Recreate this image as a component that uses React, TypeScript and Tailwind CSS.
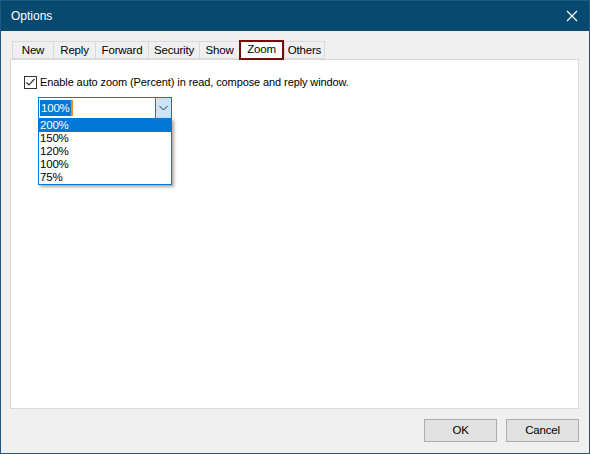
import React from "react";

const tabs = ["New", "Reply", "Forward", "Security", "Show", "Zoom", "Others"];
const tabWidths: Record<string, string> = {
  New: "w-[41px]",
  Reply: "w-[42px]",
  Forward: "w-[53px]",
  Security: "w-[51px]",
  Show: "w-[40px]",
  Zoom: "w-[45px]",
  Others: "w-[41px]",
};

const options = ["200%", "150%", "120%", "100%", "75%"];

export default function App() {
  return (
    <div
      className="w-[590px] h-[454px] flex flex-col border border-[#1d5b86] bg-[#f0f0f0] text-[11.5px] tracking-[-0.2px] text-black"
      style={{ fontFamily: '"Liberation Sans", Arial, sans-serif' }}
    >
      {/* title bar */}
      <div className="h-[30px] bg-[#084a6f] flex items-center justify-between pl-[10px] pr-[10px] text-white">
        <span className="text-[12px] tracking-normal leading-none">Options</span>
        <svg width="12" height="12" viewBox="0 0 12 12" className="mr-[1px]">
          <path d="M1 1 L11 11 M11 1 L1 11" stroke="#ffffff" strokeWidth="1.2" />
        </svg>
      </div>

      <div className="flex-1 flex flex-col">
        {/* tab strip */}
        <div className="flex items-end pl-[11px] pt-[9px] h-[28px]">
          {tabs.map((t) =>
            t === "Zoom" ? (
              <div
                key={t}
                className={`${tabWidths[t]} h-[20px] bg-white border-2 border-[#7a0b0b] flex items-start justify-center leading-[15px] -mb-[1px] relative z-10`}
              >
                {t}
              </div>
            ) : (
              <div
                key={t}
                className={`${tabWidths[t]} h-[18px] border border-[#d9d9d9] border-r-0 last:border-r bg-[#f0f0f0] flex items-center justify-center leading-none pt-[1px]`}
              >
                {t}
              </div>
            )
          )}
        </div>

        {/* tab page */}
        <div className="ml-[9px] w-[569px] h-[350px] bg-white border border-[#d9d9d9] relative">
          <div className="flex items-center pl-[13px] pt-[16px] gap-[3px]">
            <div className="w-[13px] h-[13px] border border-[#333333] bg-white flex items-center justify-center">
              <svg width="11" height="11" viewBox="0 0 11 11">
                <path d="M1.5 5.5 L4 8 L9.5 2" stroke="#333333" strokeWidth="1.2" fill="none" />
              </svg>
            </div>
            <span className="leading-none text-[11px] tracking-[-0.1px]">
              Enable auto zoom (Percent) in read, compose and reply window.
            </span>
          </div>

          {/* combo box */}
          <div className="ml-[27px] mt-[8px] w-[134px] h-[22px] border border-[#0078d7] flex items-stretch relative">
            <div className="flex-1 flex items-center pl-[1px]">
              <span className="bg-[#0078d7] text-white px-[1px] leading-[16px]">100%</span>
              <span className="w-[2px] h-[16px] bg-[#f08a24]" />
            </div>
            <div className="w-[16px] bg-[#cce4f7] border-l border-[#0078d7] flex items-center justify-center">
              <svg width="9" height="6" viewBox="0 0 9 6">
                <path d="M0.5 1 L4.5 5 L8.5 1" stroke="#333333" strokeWidth="1" fill="none" />
              </svg>
            </div>

            {/* dropdown list */}
            <div className="absolute left-[-1px] top-[20px] w-[134px] bg-white border border-[#0078d7] shadow-[2px_2px_3px_rgba(0,0,0,0.35)] z-20">
              {options.map((o, i) => (
                <div
                  key={o}
                  className={`h-[13px] leading-[13px] pl-[1px] overflow-hidden ${i === 0 ? "bg-[#0078d7] text-white" : ""}`}
                >
                  {o}
                </div>
              ))}
            </div>
          </div>
        </div>

        {/* buttons */}
        <div className="flex justify-end gap-[9px] pr-[10px] pt-[10px]">
          <button className="w-[73px] h-[23px] bg-[#e1e1e1] border border-[#adadad] leading-none">OK</button>
          <button className="w-[73px] h-[23px] bg-[#e1e1e1] border border-[#adadad] leading-none">Cancel</button>
        </div>
      </div>
    </div>
  );
}
